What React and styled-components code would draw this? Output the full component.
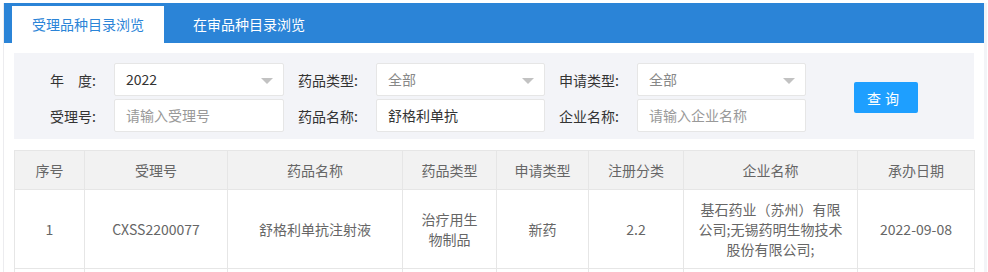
import React from "react";
import styled, { createGlobalStyle } from "styled-components";

const Global = createGlobalStyle`
  html, body { margin: 0; padding: 0; background: #fff; overflow: hidden; }
  body { font-family: "Microsoft YaHei", "Noto Sans CJK SC", sans-serif; font-size: 14px; color: #333; }
  * { box-sizing: border-box; }
`;

const Page = styled.div`
  padding: 3px 1px 0 3px;
`;

const Panel = styled.div`
  background: #fff;
  border-left: 1px solid #ececef;
  border-right: 3px solid #f3f4f7;
  min-height: 269px;
`;

const TabBar = styled.div`
  display: flex;
  height: 40px;
  padding: 3px 0 0 8px;
  background: #2b84d7;
`;

const Tab = styled.div`
  height: 37px;
  line-height: 37px;
  padding: 0 20px;
  margin-right: 9px;
  font-size: 14px;
  color: ${(p) => (p.$active ? "#2b84d7" : "#fff")};
  background: ${(p) => (p.$active ? "#fff" : "transparent")};
`;

const Body = styled.div`
  padding: 10px 10px 0 10px;
`;

const Filter = styled.div`
  display: grid;
  grid-template-columns: 100px 170px 92px 169px 92px 169px 1fr;
  grid-template-rows: 33px 33px;
  row-gap: 3px;
  align-items: center;
  padding: 10px 0 7px;
  background: #f3f4f8;
`;

const Label = styled.div`
  text-align: right;
  padding-right: 18px;
  color: #333;
  white-space: nowrap;
`;

const Field = styled.div`
  position: relative;
  height: 33px;
  line-height: 31px;
  padding: 0 11px;
  background: #fff;
  border: 1px solid #e6e6e6;
  border-radius: 2px;
  color: ${(p) => (p.$muted ? "#999" : p.$gray ? "#888" : "#333")};
  white-space: nowrap;
  overflow: hidden;
`;

const Arrow = styled.span`
  position: absolute;
  right: 10px;
  top: 14px;
  width: 0;
  height: 0;
  border-left: 6px solid transparent;
  border-right: 6px solid transparent;
  border-top: 6px solid #c2c2c2;
`;

const Button = styled.button`
  grid-column: 7;
  grid-row: 1 / span 2;
  justify-self: start;
  margin-left: 48px;
  width: 64px;
  height: 31px;
  border: none;
  border-radius: 2px;
  background: #1e9fff;
  color: #fff;
  font-family: inherit;
  font-size: 14px;
  letter-spacing: 4px;
  padding-left: 4px;
`;

const Table = styled.table`
  margin-top: 11px;
  width: 960px;
  table-layout: fixed;
  border-collapse: collapse;
  color: #666;
  font-size: 14px;
`;

const Th = styled.th`
  height: 39px;
  padding: 9px 14px;
  line-height: 20px;
  font-weight: normal;
  background: #f2f2f2;
  border: 1px solid #e6e6e6;
  text-align: center;
`;

const Td = styled.td`
  height: ${(p) => (p.$blank ? "40px" : "auto")};
  padding: 9px 14px;
  line-height: 20px;
  border: 1px solid #e6e6e6;
  text-align: center;
  vertical-align: middle;
  word-break: break-all;
`;

const cols = [70, 143, 175, 94, 92, 95, 174, 117];
const heads = ["序号", "受理号", "药品名称", "药品类型", "申请类型", "注册分类", "企业名称", "承办日期"];
const rows = [
  ["1", "CXSS2200077", "舒格利单抗注射液", "治疗用生物制品", "新药", "2.2", "基石药业（苏州）有限公司;无锡药明生物技术股份有限公司;", "2022-09-08"],
];

export default function App() {
  return (
    <>
      <Global />
      <Page>
        <Panel>
          <TabBar>
            <Tab $active>受理品种目录浏览</Tab>
            <Tab>在审品种目录浏览</Tab>
          </TabBar>
          <Body>
            <Filter>
              <Label>年　度:</Label>
              <Field>2022<Arrow /></Field>
              <Label>药品类型:</Label>
              <Field $gray>全部<Arrow /></Field>
              <Label>申请类型:</Label>
              <Field $gray>全部<Arrow /></Field>
              <Button>查询</Button>
              <Label>受理号:</Label>
              <Field $muted>请输入受理号</Field>
              <Label>药品名称:</Label>
              <Field>舒格利单抗</Field>
              <Label>企业名称:</Label>
              <Field $muted>请输入企业名称</Field>
            </Filter>
            <Table>
              <colgroup>
                {cols.map((w, i) => (
                  <col key={i} style={{ width: w }} />
                ))}
              </colgroup>
              <thead>
                <tr>
                  {heads.map((h) => (
                    <Th key={h}>{h}</Th>
                  ))}
                </tr>
              </thead>
              <tbody>
                {rows.map((r) => (
                  <tr key={r[0]}>
                    {r.map((c, i) => (
                      <Td key={i}>{c}</Td>
                    ))}
                  </tr>
                ))}
                <tr>
                  {cols.map((w, i) => (
                    <Td key={i} $blank />
                  ))}
                </tr>
              </tbody>
            </Table>
          </Body>
        </Panel>
      </Page>
    </>
  );
}
